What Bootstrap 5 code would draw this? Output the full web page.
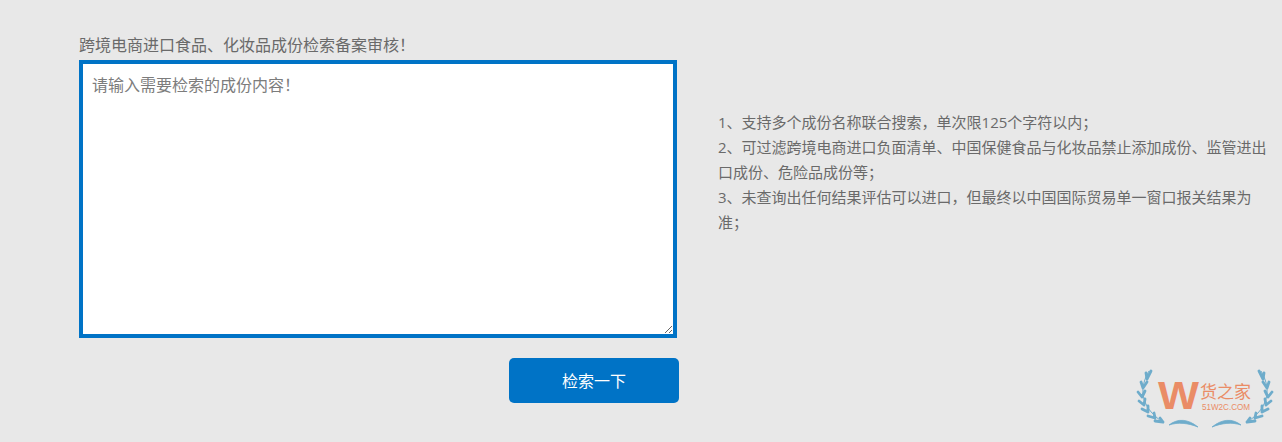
<!DOCTYPE html>
<html lang="zh-CN">
<head>
  <meta charset="UTF-8">
  <meta name="viewport" content="width=device-width, initial-scale=1.0">
  <title>成份检索</title>
  <link href="https://cdn.jsdelivr.net/npm/bootstrap@5.3.0/dist/css/bootstrap.min.css" rel="stylesheet">
  <style>
    body {
      background: #e8e8e8;
      color: #6a6a6a;
      font-family: "Open Sans", "Noto Sans CJK SC", sans-serif;
      height: 442px;
      overflow: hidden;
      position: relative;
    }
    .search-page {
      padding: 33px 0 0 79px;
    }
    .search-left {
      width: 600px;
      flex: none;
    }
    .search-label {
      font-size: 16px;
      line-height: 24px;
      margin-bottom: 3px;
    }
    .search-box.form-control {
      display: block;
      width: 598px;
      height: 278px;
      border: 4px solid #0073c6;
      border-radius: 0;
      padding: 9px 9px;
      font-size: 16px;
      line-height: 24px;
      color: #666;
      background: #fff;
      box-shadow: none;
    }
    .search-box::placeholder {
      color: #7c7c7c;
      opacity: 1;
    }
    .search-btn.btn {
      width: 170px;
      height: 45px;
      margin-top: 20px;
      background: #0073c6;
      border: 0;
      border-radius: 5px;
      color: #fff;
      font-size: 16px;
    }
    .search-notes {
      width: 552px;
      margin: 77px 0 0 39px;
      font-size: 15px;
      line-height: 25px;
    }
    .search-notes p {
      margin: 0;
    }
    .site-mark {
      position: absolute;
      left: 1130px;
      top: 362px;
    }
    .site-mark text {
      font-family: "Liberation Sans", "Noto Sans CJK SC", sans-serif;
      fill: #ea8c66;
    }
  </style>
</head>
<body>
  <div class="search-page d-flex align-items-start">
    <div class="search-left d-flex flex-column align-items-end">
      <label for="ingredients" class="search-label align-self-start">跨境电商进口食品、化妆品成份检索备案审核！</label>
      <textarea id="ingredients" class="search-box form-control align-self-start" placeholder="请输入需要检索的成份内容！"></textarea>
      <button type="button" class="search-btn btn">检索一下</button>
    </div>
    <div class="search-notes">
      <p>1、支持多个成份名称联合搜索，单次限125个字符以内；</p>
      <p>2、可过滤跨境电商进口负面清单、中国保健食品与化妆品禁止添加成份、监管进出口成份、危险品成份等；</p>
      <p>3、未查询出任何结果评估可以进口，但最终以中国国际贸易单一窗口报关结果为准；</p>
    </div>
  </div>

  <!-- watermark logo -->
  <svg class="site-mark" width="150" height="72" viewBox="0 0 150 72" fill="none">
    <defs>
      <g id="laurel">
        <g stroke="#6eaccb" stroke-width="2.8" stroke-linecap="round">
          <path d="M17 17l4-8M17 17l-1-6M13 26l4-6M13 26l-2-6M12 35l3-6M12 35l-4-5M14 43l1-6M14 43l-5-4M18 50l0-6M18 50l-6-3M25 56l-1-5M25 56l-7-2M33 60l-3-4M33 60l-8-1"/>
        </g>
        <path d="M19 9C10 24 8 44 34 61" stroke="#6eaccb" stroke-width="1"/>
        <path d="M39 63C48 56 58 57 68 65C58 61 48 60 39 63Z" fill="#6eaccb" stroke="#6eaccb" stroke-width="0.8"/>
      </g>
    </defs>
    <use href="#laurel"/>
    <use href="#laurel" transform="translate(150 0) scale(-1 1)"/>
    <text x="28" y="47" font-size="39" font-weight="700" textLength="41" lengthAdjust="spacingAndGlyphs">W</text>
    <text x="70" y="36" font-size="17" textLength="51">货之家</text>
    <text x="72" y="48" font-size="9.5" textLength="48" lengthAdjust="spacingAndGlyphs">51W2C.COM</text>
  </svg>

  <script src="https://cdn.jsdelivr.net/npm/bootstrap@5.3.0/dist/js/bootstrap.bundle.min.js"></script>
</body>
</html>
